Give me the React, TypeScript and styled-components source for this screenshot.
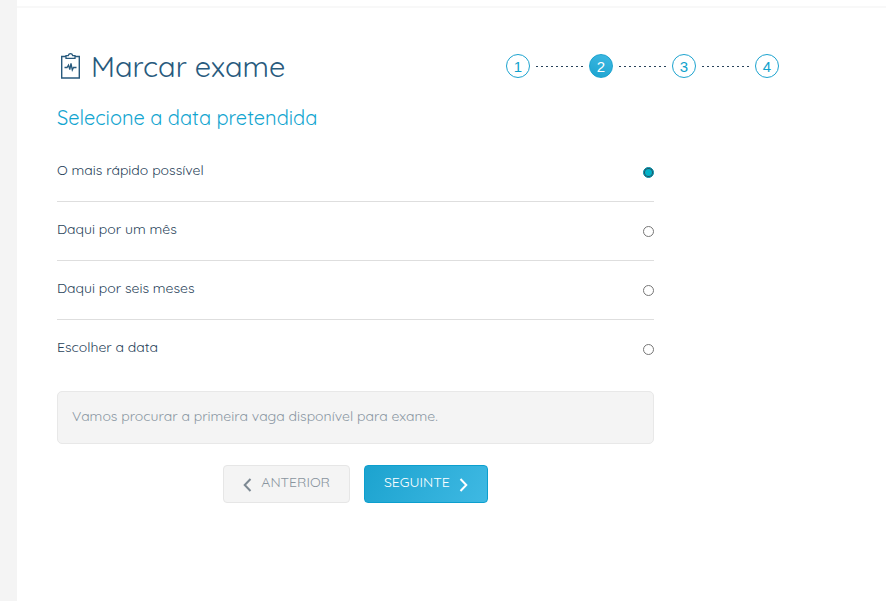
import React, { Fragment, useState } from "react";
import styled, { createGlobalStyle, css } from "styled-components";

const GlobalStyle = createGlobalStyle`
  *, *::before, *::after { box-sizing: border-box; }
  body {
    margin: 0;
    background: #fff;
    color: #284259;
    font-family: Quicksand, Lato, "Open Sans", sans-serif;
    font-size: 14px;
    line-height: 23px;
  }
`;

const Page = styled.div`
  display: flex;
  min-height: 100vh;
`;

const SideStrip = styled.aside`
  flex: 0 0 17px;
  background: #f4f4f4;
`;

const Main = styled.main`
  flex: 1;
  min-width: 0;
`;

const TopBar = styled.div`
  height: 8px;
  border-bottom: 2px solid #f8f8f8;
`;

const Content = styled.div`
  padding: 38px 40px 40px;
`;

const Header = styled.header`
  display: flex;
  align-items: center;
  justify-content: space-between;
  max-width: 722px;
  height: 40px;
`;

const Title = styled.h1`
  display: flex;
  align-items: center;
  gap: 11px;
  margin: 0;
  padding-left: 4px;
  color: #285a7d;
  font-size: 29px;
  font-weight: 400;
  line-height: 40px;
`;

const Steps = styled.ol`
  display: flex;
  align-items: center;
  gap: 6px;
  margin: 0;
  padding: 0;
  list-style: none;
`;

const Step = styled.li<{ $active?: boolean }>`
  display: flex;
  align-items: center;
  justify-content: center;
  width: 24px;
  height: 24px;
  padding-top: 2px;
  border: 1px solid #1ca3cf;
  border-radius: 50%;
  color: #0fa2cc;
  font: 15px/20px "Liberation Sans", Arial, sans-serif;
  ${(p) =>
    p.$active &&
    css`
      background: linear-gradient(200deg, #3fb9e3, #1ca3cf);
      color: #fff;
    `}
`;

const StepLine = styled.li`
  width: 47px;
  height: 1px;
  background: repeating-linear-gradient(90deg, #284259 0 2px, transparent 2px 5px);
`;

const Form = styled.form`
  max-width: 597px;
`;

const Subtitle = styled.h2`
  margin: 19px 0 12px;
  color: #12a5d0;
  font-size: 20px;
  font-weight: 400;
  line-height: 26px;
`;

const Options = styled.div`
  display: flex;
  flex-direction: column;
`;

const Option = styled.label`
  display: flex;
  align-items: center;
  justify-content: space-between;
  padding: 16px 0 19px;
  border-bottom: 1px solid #dedede;
  cursor: pointer;
  &:last-child { border-bottom: 0; }
`;

const Radio = styled.input`
  appearance: none;
  width: 11px;
  height: 11px;
  margin: 3px 0 0;
  border: 1px solid #767676;
  border-radius: 50%;
  background: #fff;
  &:checked {
    border-color: #078aa0;
    background: #00b3c8;
    box-shadow: inset 0 0 0 1px #2c4a5e;
  }
`;

const Notice = styled.p`
  margin: 13px 0 21px;
  padding: 13px 14px 15px;
  border: 1px solid #e8e8e8;
  border-radius: 5px;
  background: #f4f4f4;
  color: #8996a2;
`;

const Actions = styled.div`
  display: flex;
  justify-content: center;
  gap: 14px;
`;

const Button = styled.button<{ $primary?: boolean }>`
  display: flex;
  align-items: center;
  gap: 9px;
  height: 38px;
  padding: 0 19px 3px;
  border: 1px solid #e6e6e6;
  border-radius: 4px;
  background: #f4f4f4;
  color: #8a959f;
  font: inherit;
  cursor: pointer;
  svg { margin-top: 4px; }
  ${(p) =>
    p.$primary &&
    css`
      border-color: #0c9fce;
      background: linear-gradient(120deg, #1ca3cf, #3fb9e3);
      color: #fff;
    `}
`;

const ClipboardIcon = () => (
  <svg width="19" height="26" viewBox="0 0 19 26" fill="none" stroke="#285a7d" aria-hidden="true">
    <path d="M5 3.5H.7V25h17.6V3.5H14" strokeWidth="1.4" />
    <path d="M5 5.3V2.7h2.2C7.6 1.3 8.3.7 9.5.7s1.9.6 2.3 2H14v2.6Z" strokeWidth="1.3" />
    <path d="M3.5 14.5H6l1.5-2.5 1.3 4.5L10 10.5l1.3 6.5 1.2-2.5h3" strokeWidth="1.3" />
  </svg>
);

const Chevron = ({ direction }: { direction: "left" | "right" }) => (
  <svg width="9" height="14" viewBox="0 0 9 14" fill="none" stroke={direction === "left" ? "#7d8993" : "#fff"} strokeWidth="2" aria-hidden="true">
    <path d={direction === "left" ? "M7.5 1 1.7 7l5.8 6" : "M1.5 1l5.8 6-5.8 6"} />
  </svg>
);

const choices = [
  "O mais rápido possível",
  "Daqui por um mês",
  "Daqui por seis meses",
  "Escolher a data",
];

export default function App() {
  const [selected, setSelected] = useState(choices[0]);
  return (
    <>
      <GlobalStyle />
      <Page>
        <SideStrip />
        <Main>
          <TopBar />
          <Content>
            <Header>
              <Title>
                <ClipboardIcon />
                Marcar exame
              </Title>
              <Steps>
                {[1, 2, 3, 4].map((n) => (
                  <Fragment key={n}>
                    {n > 1 && <StepLine aria-hidden="true" />}
                    <Step $active={n === 2} aria-current={n === 2 ? "step" : undefined}>
                      {n}
                    </Step>
                  </Fragment>
                ))}
              </Steps>
            </Header>
            <Form onSubmit={(e) => e.preventDefault()}>
              <Subtitle id="date-title">Selecione a data pretendida</Subtitle>
              <Options role="radiogroup" aria-labelledby="date-title">
                {choices.map((choice) => (
                  <Option key={choice}>
                    {choice}
                    <Radio
                      type="radio"
                      name="date"
                      value={choice}
                      checked={selected === choice}
                      onChange={() => setSelected(choice)}
                    />
                  </Option>
                ))}
              </Options>
              <Notice>Vamos procurar a primeira vaga disponível para exame.</Notice>
              <Actions>
                <Button type="button">
                  <Chevron direction="left" />
                  ANTERIOR
                </Button>
                <Button type="submit" $primary>
                  SEGUINTE
                  <Chevron direction="right" />
                </Button>
              </Actions>
            </Form>
          </Content>
        </Main>
      </Page>
    </>
  );
}
